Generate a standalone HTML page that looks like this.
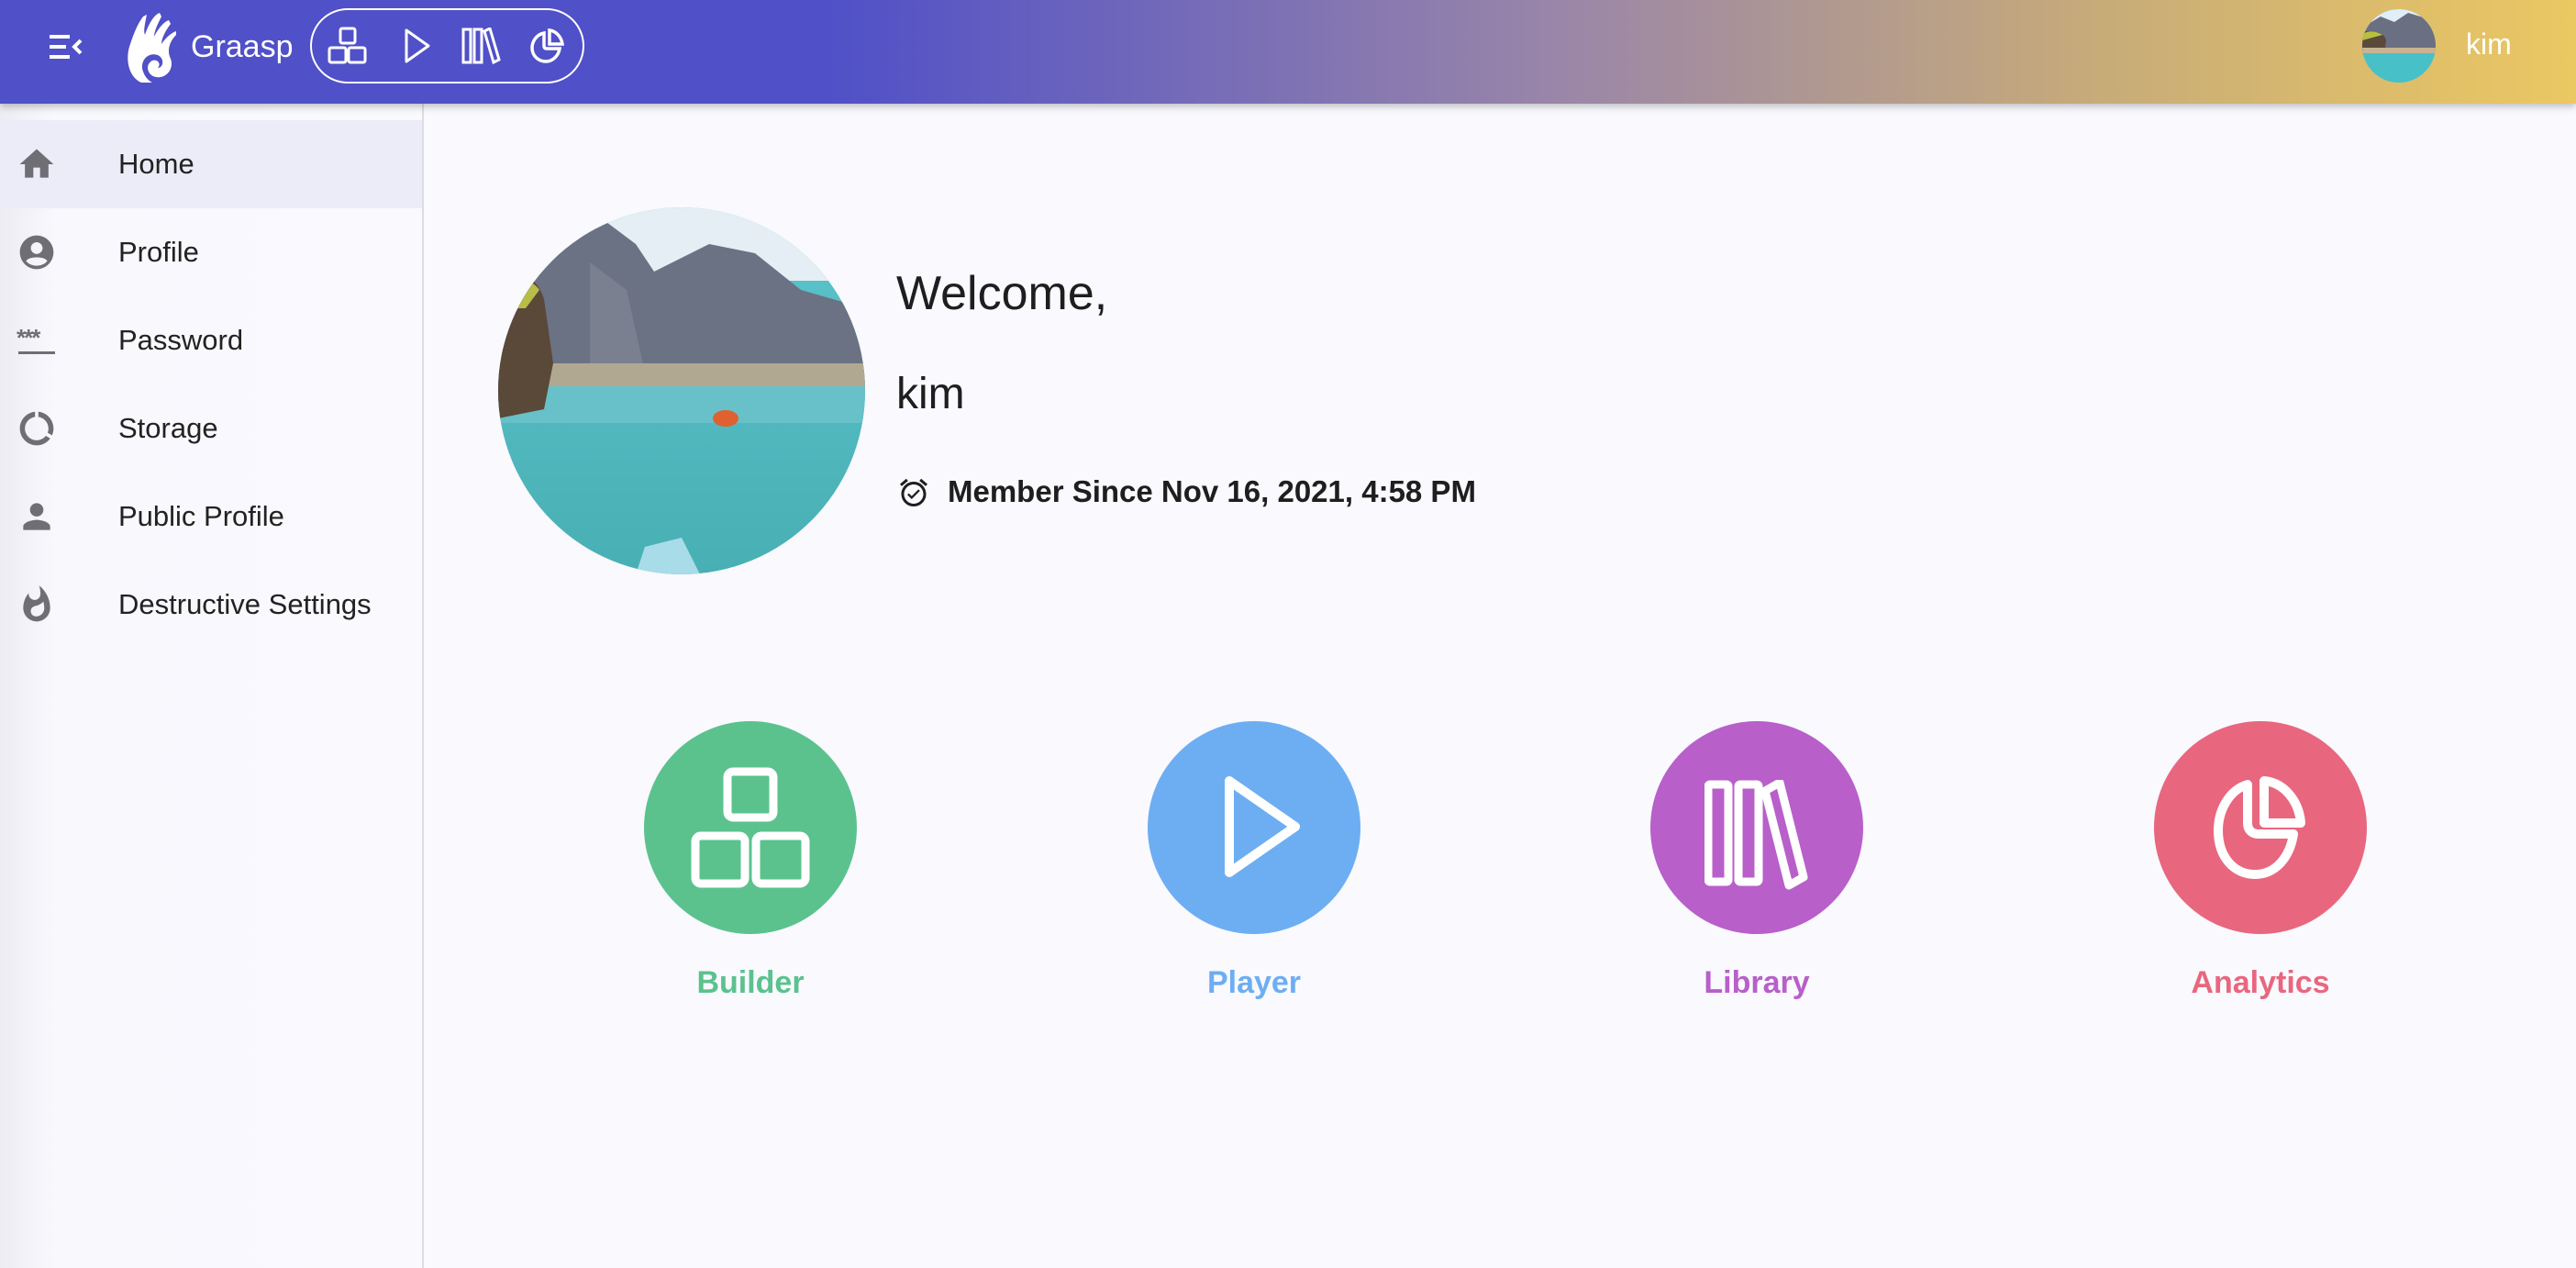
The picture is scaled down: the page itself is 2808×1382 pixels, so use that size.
<!DOCTYPE html>
<html><head><meta charset="utf-8">
<style>
*{margin:0;padding:0;box-sizing:border-box}
body{width:2808px;height:1382px;overflow:hidden;background:#f9f9fe;font-family:"Liberation Sans",sans-serif;position:relative}
.hdr{position:absolute;left:0;top:0;width:2808px;height:113px;background:linear-gradient(90deg,#5050c8 0px,#5050c8 900px,#9a86a8 1700px,#c8ac78 2300px,#ebc862 2808px);box-shadow:0 3px 8px rgba(0,0,0,.25);z-index:2}
.side{position:absolute;left:0;top:113px;width:462px;height:1269px;background:linear-gradient(90deg,#ececf2 0,#f8f8fd 60px,#f9f9fe 100%);border-right:2px solid #dcdce4}
.row{position:absolute;left:0;width:460px;height:96px;font-size:31px;color:#222;}
.row span{position:absolute;left:129px;top:30px}
.row svg{position:absolute;left:18px;top:26px}
.abs{position:absolute}
.lbl{position:absolute;font-weight:bold;font-size:34px;width:300px;text-align:center;top:1052px}
.circ{position:absolute;width:232px;height:232px;border-radius:50%;top:786px}
</style></head><body>
<div class="hdr">
  <svg class="abs" style="left:52px;top:38px" width="40" height="26" viewBox="0 0 40 26"><rect x="2" y="0" width="22" height="4" fill="#fff"/><rect x="2" y="11" width="18" height="4" fill="#fff"/><rect x="2" y="22" width="22" height="4" fill="#fff"/><path d="M36 6 L29 13 L36 20" stroke="#fff" stroke-width="4" fill="none"/></svg>
  <svg class="abs" style="left:136px;top:12px" width="66" height="80" viewBox="0 0 66 80"><path d="M18 78 C4 72 0 52 6 36 C10 24 14 14 20 6 L24 4 C22 14 20 22 22 26 C26 14 32 4 38 2 L40 6 C36 14 32 22 32 28 C36 20 42 12 48 10 L50 14 C44 22 40 30 40 36 C44 30 50 24 56 22 L56 26 C48 34 46 44 50 52 C54 62 46 74 34 72 C24 70 22 58 30 54 C36 52 40 58 36 62 C42 62 44 52 36 48 C24 44 16 56 20 66 C22 72 26 76 30 78 Z" fill="#fff"/></svg>
  <div class="abs" style="left:208px;top:32px;font-size:34px;color:#fff">Graasp</div>
  <div class="abs" style="left:338px;top:9px;width:299px;height:82px;border:2px solid #fff;border-radius:41px"></div>
  <svg class="abs" style="left:357px;top:29px" width="44" height="42" viewBox="0 0 44 42" fill="none" stroke="#fff" stroke-width="3"><rect x="14" y="2" width="16" height="16" rx="2"/><rect x="2" y="23" width="18" height="16" rx="2"/><rect x="23" y="23" width="18" height="16" rx="2"/></svg>
  <svg class="abs" style="left:440px;top:30px" width="30" height="40" viewBox="0 0 30 40" fill="none" stroke="#fff" stroke-width="3" stroke-linejoin="round"><path d="M3 3 L27 20 L3 37 Z"/></svg>
  <svg class="abs" style="left:503px;top:30px" width="44" height="40" viewBox="0 0 44 40" fill="none" stroke="#fff" stroke-width="3"><rect x="2" y="2" width="8" height="36"/><rect x="14" y="2" width="8" height="36"/><path d="M25 4 L31 1 L41 35 L35 38 Z"/></svg>
  <svg class="abs" style="left:577px;top:30px" width="40" height="40" viewBox="0 0 40 40" fill="none" stroke="#fff" stroke-width="3.5"><path d="M16 6 C7 8 3 16 3 22 C3 31 10 37 18 37 C26 37 32 30 33 23 L19 23 C17 23 16 22 16 20 Z"/><path d="M22 3 C30 4 35 11 36 18 L22 18 Z"/></svg>
  <svg class="abs" style="left:2575px;top:10px" width="80" height="80" viewBox="0 0 80 80"><defs><clipPath id="c2"><circle cx="40" cy="40" r="40"/></clipPath></defs><g clip-path="url(#c2)"><rect width="80" height="80" fill="#5fc8d0"/><rect width="80" height="14" fill="#dfeef8"/><path d="M0 45 L0 20 L20 8 L35 14 L50 4 L70 10 L80 14 L80 45 Z" fill="#6a7082"/><path d="M0 50 L0 25 C8 22 24 24 26 34 L24 50 Z" fill="#5a4a3a"/><path d="M0 28 C6 22 16 24 22 28 L0 34Z" fill="#b8c040"/><rect x="0" y="42" width="80" height="6" fill="#c8b490"/><rect x="0" y="48" width="80" height="32" fill="#48c0c8"/></g></svg>
  <div class="abs" style="left:2688px;top:30px;font-size:32px;color:#fff">kim</div>
</div>
<div class="side">
  <div class="row" style="top:18px;background:#ececf8"><svg width="44" height="44" viewBox="0 0 24 24"><path d="M10 20v-6h4v6h5v-8h3L12 3 2 12h3v8z" fill="#6e6e74"/></svg><span>Home</span></div>
  <div class="row" style="top:114px"><svg width="44" height="44" viewBox="0 0 24 24"><path d="M12 2C6.5 2 2 6.5 2 12s4.5 10 10 10 10-4.5 10-10S17.5 2 12 2zm0 4c1.9 0 3.5 1.6 3.5 3.5S13.9 13 12 13s-3.5-1.6-3.5-3.5S10.1 6 12 6zm0 14c-2.5 0-4.8-1-6.3-2.8C6.6 15.6 9.2 15 12 15s5.4.6 6.3 2.2C16.8 19 14.5 20 12 20z" fill="#6e6e74"/></svg><span>Profile</span></div>
  <div class="row" style="top:210px"><svg width="48" height="44" viewBox="0 0 48 44"><text x="0" y="28" font-size="26" font-weight="bold" fill="#6e6e74" font-family="Liberation Sans" letter-spacing="-2">***</text><rect x="2" y="34" width="40" height="3" fill="#6e6e74"/></svg><span>Password</span></div>
  <div class="row" style="top:306px"><svg width="44" height="44" viewBox="0 0 24 24"><path d="M13 2.05v3.03c3.39.49 6 3.39 6 6.92 0 .9-.18 1.75-.48 2.54l2.6 1.530c.56-1.24.88-2.62.88-4.07 0-5.18-3.95-9.45-9-9.950zM12 19c-3.87 0-7-3.13-7-7 0-3.53 2.61-6.43 6-6.92V2.05c-5.06.5-9 4.76-9 9.95 0 5.52 4.47 10 9.99 10 3.31 0 6.240-1.61 8.060-4.090l-2.6-1.53C16.17 17.98 14.21 19 12 19z" fill="#6e6e74"/></svg><span>Storage</span></div>
  <div class="row" style="top:402px"><svg width="44" height="44" viewBox="0 0 24 24"><path d="M12 12c2.2 0 4-1.8 4-4s-1.8-4-4-4-4 1.8-4 4 1.8 4 4 4zm0 2c-2.7 0-8 1.3-8 4v2h16v-2c0-2.7-5.3-4-8-4z" fill="#6e6e74"/></svg><span>Public Profile</span></div>
  <div class="row" style="top:498px"><svg width="44" height="44" viewBox="0 0 24 24"><path d="M13.5.67s.74 2.65.74 4.8c0 2.06-1.35 3.73-3.41 3.73-2.07 0-3.63-1.670-3.63-3.730l.03-.36C5.21 7.51 4 10.62 4 14c0 4.42 3.58 8 8 8s8-3.58 8-8C20 8.61 17.41 3.8 13.5.67zM11.71 19c-1.78 0-3.22-1.4-3.22-3.14 0-1.62 1.05-2.76 2.81-3.12 1.77-.36 3.6-1.21 4.62-2.58.39 1.29.59 2.65.59 4.04 0 2.65-2.15 4.8-4.8 4.8z" fill="#6e6e74"/></svg><span>Destructive Settings</span></div>
</div>
<svg class="abs" style="left:543px;top:226px" width="400" height="400" viewBox="0 0 400 400"><defs><clipPath id="c1"><circle cx="200" cy="200" r="200"/></clipPath><linearGradient id="w" x1="0" y1="0" x2="0" y2="1"><stop offset="0" stop-color="#5cc4cc"/><stop offset="1" stop-color="#48b0b4"/></linearGradient></defs><g clip-path="url(#c1)"><rect width="400" height="400" fill="url(#w)"/><rect width="400" height="80" fill="#e4eef4"/><path d="M0 200 L0 60 L60 30 L110 10 L150 40 L170 70 L230 40 L280 50 L330 90 L400 110 L400 200 Z" fill="#6a7284"/><path d="M100 60 L140 90 L160 180 L100 190Z" fill="#7a8090"/><rect x="0" y="170" width="400" height="30" fill="#b0a890"/><rect x="0" y="195" width="400" height="40" fill="#68c0c8"/><path d="M0 230 L0 90 C20 70 40 70 50 100 L60 170 L50 220 Z" fill="#5a4838"/><path d="M0 110 C10 80 30 70 45 90 L30 110 Z" fill="#b8bc48"/><ellipse cx="248" cy="230" rx="14" ry="9" fill="#e06030"/><path d="M150 400 L160 370 L200 360 L220 400Z" fill="#a8dce8"/></g></svg>
<div class="abs" style="left:977px;top:290px;font-size:52px;color:#1e1e1e">Welcome,</div>
<div class="abs" style="left:977px;top:402px;font-size:48px;color:#1e1e1e">kim</div>
<svg class="abs" style="left:978px;top:518px" width="36" height="38" viewBox="0 0 24 24"><path d="M22 5.72l-4.6-3.86-1.29 1.53 4.6 3.86L22 5.72zM7.88 3.39L6.6 1.86 2 5.71l1.29 1.53 4.59-3.85zM12 4c-4.970 0-9 4.030-9 9s4.020 9 9 9c4.970 0 9-4.030 9-9s-4.030-9-9-9zm0 16c-3.870 0-7-3.130-7-7s3.130-7 7-7 7 3.130 7 7-3.130 7-7 7zm-1.46-5.47L8.41 12.4l-1.06 1.06 3.18 3.18 6-6-1.06-1.06-4.93 4.95z" fill="#1e1e1e"/></svg>
<div class="abs" style="left:1033px;top:517px;font-size:33px;font-weight:bold;color:#1e1e1e">Member Since Nov 16, 2021, 4:58 PM</div>

<div class="circ" style="left:702px;background:#5bc28e"></div>
<svg class="abs" style="left:751px;top:836px" width="134" height="132" viewBox="0 0 134 132" fill="none" stroke="#fff" stroke-width="9"><rect x="42" y="5" width="50" height="50" rx="6"/><rect x="7" y="75" width="54" height="52" rx="6"/><rect x="73" y="75" width="54" height="52" rx="6"/></svg>
<div class="lbl" style="left:668px;color:#5bc28e">Builder</div>

<div class="circ" style="left:1251px;background:#6daef2"></div>
<svg class="abs" style="left:1330px;top:845px" width="90" height="112" viewBox="0 0 90 112" fill="none" stroke="#fff" stroke-width="10" stroke-linejoin="round"><path d="M10 6 L82 56 L10 106 Z"/></svg>
<div class="lbl" style="left:1217px;color:#6daef2">Player</div>

<div class="circ" style="left:1799px;background:#b85fca"></div>
<svg class="abs" style="left:1858px;top:850px" width="120" height="120" viewBox="0 0 120 120" fill="none" stroke="#fff" stroke-width="9"><rect x="4" y="5" width="22" height="106" rx="2"/><rect x="37" y="5" width="22" height="106" rx="2"/><path d="M66 12 L82 3 L108 106 L92 115 Z" stroke-linejoin="round"/></svg>
<div class="lbl" style="left:1765px;color:#b85fca">Library</div>

<div class="circ" style="left:2348px;background:#e8677e"></div>
<svg class="abs" style="left:2410px;top:845px" width="112" height="116" viewBox="0 0 112 116" fill="none" stroke="#fff" stroke-width="10" stroke-linejoin="round"><path d="M40 10 C20 16 8 38 8 60 C8 90 26 108 48 108 C70 108 86 90 90 64 L52 64 C45 64 40 60 40 52 Z"/><path d="M58 6 C80 8 96 28 98 52 L58 52 Z"/></svg>
<div class="lbl" style="left:2314px;color:#e8677e">Analytics</div>
</body></html>
